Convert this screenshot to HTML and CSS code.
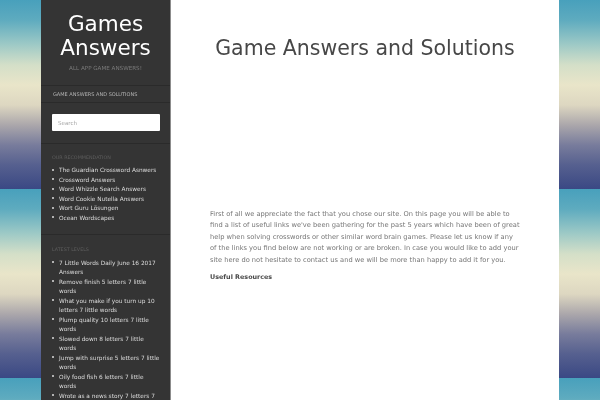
FILE: index.html
```html
<!DOCTYPE html>
<html>
<head>
<meta charset="utf-8">
<link rel="stylesheet" href="styles.css">
</head>
<body>
<div class="wrap">
  <aside class="sidebar">
    <header class="brand">
      <h1 class="site-title">Games<br>Answers</h1>
      <p class="site-desc">ALL APP GAME ANSWERS!</p>
    </header>
    <nav class="menu">GAME ANSWERS AND SOLUTIONS</nav>
    <div class="search-box">
      <input class="search" type="text" placeholder="Search">
    </div>
    <section class="widget">
      <h3 class="widget-title">OUR RECOMMENDATION</h3>
      <ul class="list">
        <li>The Guardian Crossword Asnwers</li>
        <li>Crossword Answers</li>
        <li>Word Whizzle Search Answers</li>
        <li>Word Cookie Nutella Answers</li>
        <li>Wort Guru Lösungen</li>
        <li>Ocean Wordscapes</li>
      </ul>
    </section>
    <section class="widget last">
      <h3 class="widget-title">LATEST LEVELS</h3>
      <ul class="list">
        <li>7 Little Words Daily June 16 2017 Answers</li>
        <li>Remove finish 5 letters 7 little words</li>
        <li>What you make if you turn up 10 letters 7 little words</li>
        <li>Plump quality 10 letters 7 little words</li>
        <li>Slowed down 8 letters 7 little words</li>
        <li>Jump with surprise 5 letters 7 little words</li>
        <li>Oily food fish 6 letters 7 little words</li>
        <li>Wrote as a news story 7 letters 7 little words</li>
      </ul>
    </section>
  </aside>
  <main class="content">
    <h2 class="page-title">Game Answers and Solutions</h2>
    <div class="ad-space"></div>
    <p class="intro">First of all we appreciate the fact that you chose our site. On this page you will be able to find a list of useful links we've been gathering for the past 5 years which have been of great help when solving crosswords or other similar word brain games. Please let us know if any of the links you find below are not working or are broken. In case you would like to add your site here do not hesitate to contact us and we will be more than happy to add it for you.</p>
    <h4 class="sub">Useful Resources</h4>
  </main>
</div>
</body>
</html>
```

FILE: styles.css
```css
html, body {
  margin: 0;
  padding: 0;
  height: 100%;
}
body {
  font-family: "DejaVu Sans", sans-serif;
  -webkit-font-smoothing: antialiased;
  background-image: linear-gradient(to bottom,
    #48a0bc 0px, #5eabbf 20px, #9fcac6 45px, #d4dfc8 65px,
    #e9e5c9 85px, #ddd7c1 105px, #aba7ab 125px, #787c9c 145px,
    #56608f 165px, #3a4884 189px);
  background-size: 100% 189px;
  background-repeat: repeat;
  overflow: hidden;
}
.wrap {
  width: 518px;
  margin: 0 auto;
  display: flex;
  height: 400px;
  overflow: hidden;
  will-change: transform;
}
.sidebar {
  width: 129px;
  flex: none;
  background: #343434;
  border-right: 1px solid #8c8c8c;
  color: #d4d4d4;
}
.brand {
  padding: 12px 0 12px;
  text-align: center;
  border-bottom: 1px solid #2a2a2a;
}
.site-title {
  margin: 0;
  font-size: 21.5px;
  line-height: 24px;
  font-weight: normal;
  color: #ffffff;
}
.site-desc {
  margin: 3px 0 0;
  font-size: 5.6px;
  line-height: 10px;
  color: #7a7a7a;
}
.menu {
  padding: 3px 0 3px 12px;
  font-size: 5px;
  line-height: 10px;
  color: #b4b4b4;
  border-bottom: 1px solid #2a2a2a;
}
.search-box {
  padding: 11px 10px 12px 11px;
  border-bottom: 1px solid #2a2a2a;
}
.search {
  display: block;
  box-sizing: border-box;
  width: 108px;
  height: 17px;
  margin: 0;
  border: none;
  border-radius: 1px;
  background: #ffffff;
  padding: 0 6px;
  font-family: "DejaVu Sans", sans-serif;
  font-size: 5.5px;
  color: #999;
  outline: none;
}
.search::placeholder {
  color: #a8a8a8;
}
.widget {
  padding: 10px 10px 11px 11px;
  border-bottom: 1px solid #2a2a2a;
}
.widget.last {
  border-bottom: none;
  padding-top: 11px;
}
.widget-title {
  margin: 0 0 4px;
  font-size: 4.8px;
  line-height: 8px;
  font-weight: normal;
  color: #5e5e5e;
}
.widget.last .widget-title {
  margin-bottom: 4.5px;
}
.list {
  list-style: none;
  margin: 0;
  padding: 0;
  font-size: 5.8px;
  line-height: 9.5px;
  color: #dcdcdc;
}
.list li {
  padding-left: 7px;
  text-indent: -7px;
}
.list li::before {
  content: "";
  display: inline-block;
  width: 2px;
  height: 2px;
  border-radius: 50%;
  background: #dcdcdc;
  margin-right: 5px;
  vertical-align: 1.4px;
}
.content {
  flex: 1;
  background: #ffffff;
  padding: 36px 39px 0 39px;
}
.page-title {
  margin: 0;
  text-align: center;
  font-size: 20.5px;
  line-height: 24px;
  font-weight: normal;
  color: #474747;
}
.ad-space {
  height: 149px;
}
.intro {
  margin: 0;
  font-size: 6.7px;
  line-height: 11.4px;
  color: #767676;
}
.sub {
  margin: 6px 0 0;
  font-size: 6.4px;
  line-height: 10px;
  font-weight: bold;
  color: #474747;
}
```
